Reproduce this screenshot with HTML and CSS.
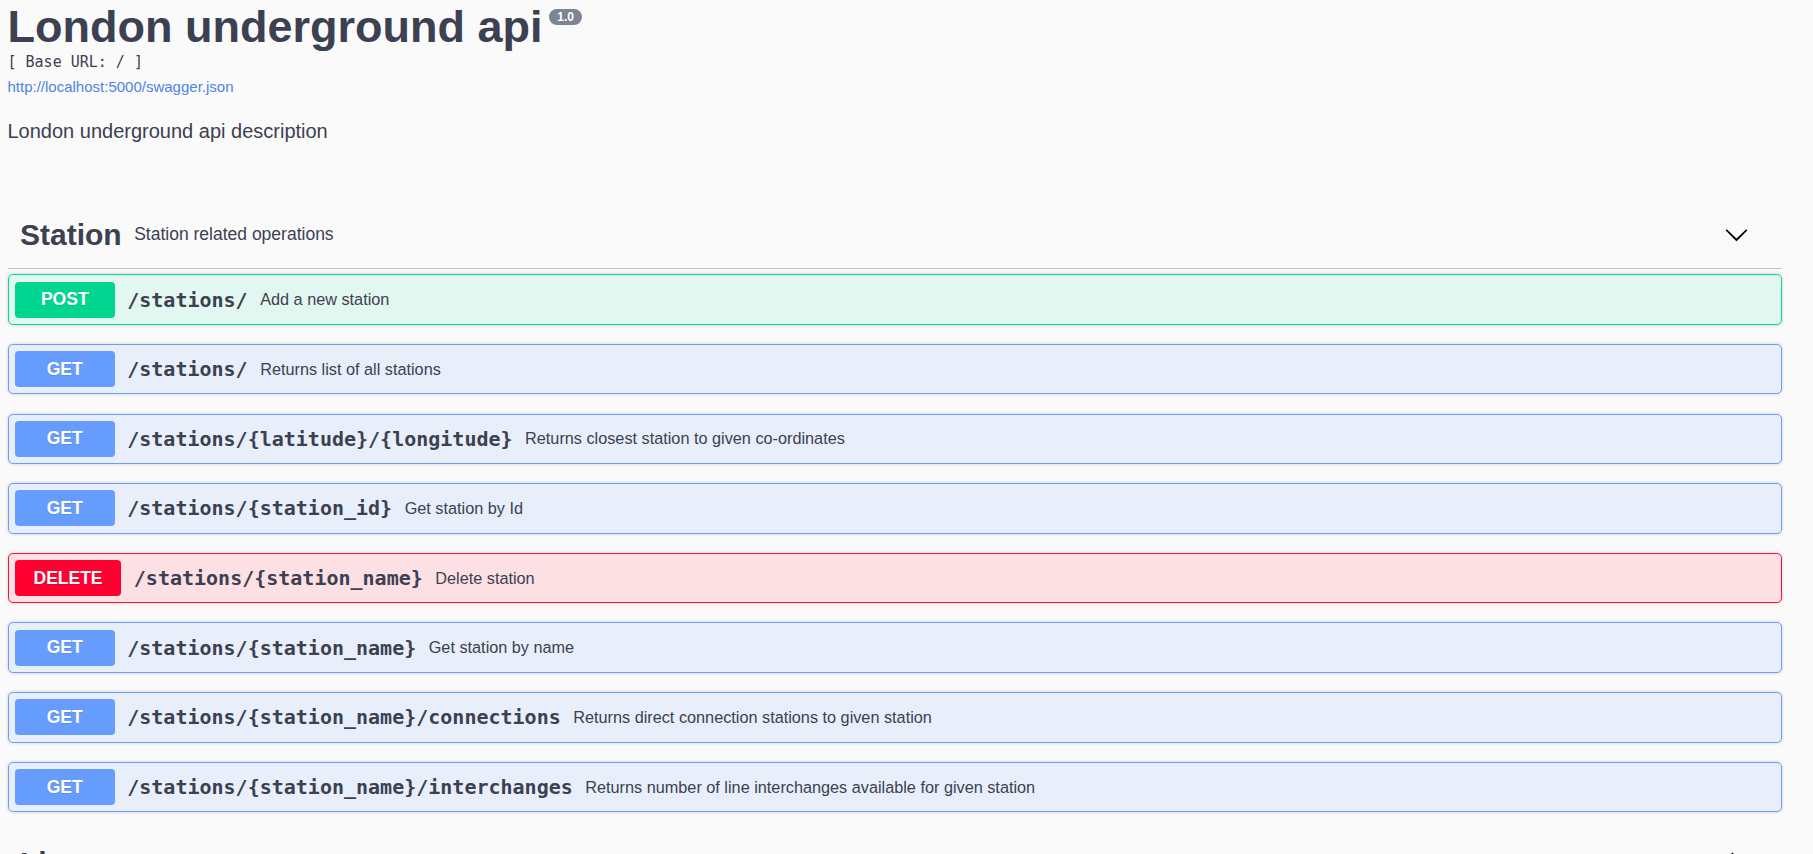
FILE: index.html
```html
<!DOCTYPE html>
<html lang="en">
<head>
<meta charset="utf-8">
<title>London underground api</title>
<link rel="stylesheet" href="styles.css">
</head>
<body>
<div class="page">
  <header class="info">
    <div class="title-row">
      <h2 class="title">London underground api</h2>
      <span class="version">1.0</span>
    </div>
    <pre class="base-url">[ Base URL: / ]</pre>
    <a class="spec-link" href="#">http://localhost:5000/swagger.json</a>
    <p class="description">London underground api description</p>
  </header>

  <section class="tag-section first">
    <div class="tag">
      <h4 class="tag-name">Station</h4>
      <small class="tag-desc">Station related operations</small>
      <button class="expand" type="button" aria-label="collapse">
        <svg viewBox="0 0 20 20" width="25" height="25"><path d="M17.418 6.109c.272-.268.709-.268.979 0s.271.701 0 .969l-7.908 7.83c-.27.268-.707.268-.979 0l-7.908-7.830c-.27-.268-.27-.701 0-.969.271-.268.709-.268.979 0L10 13.25l7.418-7.141z"/></svg>
      </button>
    </div>
    <div class="ops">
      <div class="opblock post"><div class="summary"><span class="method">POST</span><span class="path">/stations/</span><span class="desc">Add a new station</span></div></div>
      <div class="opblock get"><div class="summary"><span class="method">GET</span><span class="path">/stations/</span><span class="desc">Returns list of all stations</span></div></div>
      <div class="opblock get"><div class="summary"><span class="method">GET</span><span class="path">/stations/{latitude}/{longitude}</span><span class="desc">Returns closest station to given co-ordinates</span></div></div>
      <div class="opblock get"><div class="summary"><span class="method">GET</span><span class="path">/stations/{station_id}</span><span class="desc">Get station by Id</span></div></div>
      <div class="opblock delete"><div class="summary"><span class="method">DELETE</span><span class="path">/stations/{station_name}</span><span class="desc">Delete station</span></div></div>
      <div class="opblock get"><div class="summary"><span class="method">GET</span><span class="path">/stations/{station_name}</span><span class="desc">Get station by name</span></div></div>
      <div class="opblock get"><div class="summary"><span class="method">GET</span><span class="path">/stations/{station_name}/connections</span><span class="desc">Returns direct connection stations to given station</span></div></div>
      <div class="opblock get"><div class="summary"><span class="method">GET</span><span class="path">/stations/{station_name}/interchanges</span><span class="desc">Returns number of line interchanges available for given station</span></div></div>
    </div>
  </section>

  <section class="tag-section">
    <div class="tag">
      <h4 class="tag-name">Line</h4>
      <small class="tag-desc">Line related operations</small>
      <button class="expand" type="button" aria-label="expand">
        <svg viewBox="0 0 20 20" width="25" height="25"><path d="M13.25 10L6.109 2.58c-.268-.27-.268-.707 0-.979.268-.27.701-.27.969 0l7.83 7.908c.268.271.268.709 0 .979l-7.83 7.908c-.268.271-.701.27-.969 0-.268-.269-.268-.707 0-.979L13.25 10z"/></svg>
      </button>
    </div>
  </section>
</div>
</body>
</html>
```

FILE: styles.css
```css
* {
  box-sizing: border-box;
}

body {
  margin: 0;
  background: #fafafa;
  color: #3b4151;
  font-family: "Liberation Sans", Arial, sans-serif;
}

.page {
  width: 1774px;
  margin-left: 7.5px;
  padding-top: 1.2px;
}

/* ---------- info ---------- */
.title-row {
  display: flex;
  align-items: flex-start;
}

.title {
  margin: 0;
  font-size: 45px;
  font-weight: 700;
  line-height: normal;
  color: #3b4151;
}

.version {
  margin: 7.8px 0 0 6.3px;
  height: 16px;
  padding: 0 8.5px;
  border-radius: 10px;
  background: #7d8492;
  color: #fff;
  font-size: 12px;
  font-weight: 700;
  line-height: 16px;
}

.base-url {
  margin: 0;
  font-family: "DejaVu Sans Mono", monospace;
  font-size: 15px;
  line-height: normal;
  color: #3b4151;
}

.spec-link {
  display: block;
  width: max-content;
  margin-top: 6.4px;
  font-size: 15px;
  line-height: normal;
  color: #4f84e3;
  text-decoration: none;
}

.description {
  margin: 25px 0 0;
  font-size: 20px;
  line-height: normal;
}

/* ---------- tags ---------- */
.tag-section {
  margin-top: 21.5px;
}

.tag-section.first {
  margin-top: 62.7px;
}

.tag {
  display: flex;
  align-items: center;
  padding: 12.5px 25px 16px 12.5px;
  border-bottom: 1px solid rgba(59, 65, 81, 0.3);
  margin-bottom: 5.5px;
}

.tag-name {
  margin: 0;
  font-size: 30px;
  font-weight: 700;
  line-height: normal;
}

.tag-desc {
  flex: 1;
  padding: 0 12.5px;
  font-size: 17.5px;
}

.expand {
  display: flex;
  width: 25px;
  height: 25px;
  margin-right: 7.5px;
  padding: 0;
  border: 0;
  background: none;
}

.expand svg {
  fill: #000;
}

/* ---------- operations ---------- */
.opblock {
  margin-bottom: 19.15px;
  border: 1px solid #000;
  border-radius: 5px;
  box-shadow: 0 0 3.75px rgba(0, 0, 0, 0.19);
}

.summary {
  display: flex;
  align-items: center;
  padding: 6.25px;
}

.method {
  min-width: 100px;
  padding: 7.5px 18.75px;
  border-radius: 3.75px;
  font-size: 17.5px;
  font-weight: 700;
  line-height: normal;
  text-align: center;
  color: #fff;
  text-shadow: 0 1px 0 rgba(0, 0, 0, 0.1);
}

.path {
  padding: 0 12.5px;
  font-family: "DejaVu Sans Mono", monospace;
  font-size: 20px;
  font-weight: 700;
  color: #3b4151;
}

.desc {
  flex: 1;
  font-size: 16.25px;
  color: #3b4151;
}

.opblock.post {
  border-color: #00e08e;
  background: #e2f7ef;
}
.opblock.post .method {
  background: #00d68f;
}

.opblock.get {
  border-color: #6a9dff;
  background: #e8effa;
}
.opblock.get .method {
  background: #679cff;
}

.opblock.delete {
  border-color: #f2163a;
  background: #fce0e4;
}
.opblock.delete .method {
  background: #ff0030;
}
```
